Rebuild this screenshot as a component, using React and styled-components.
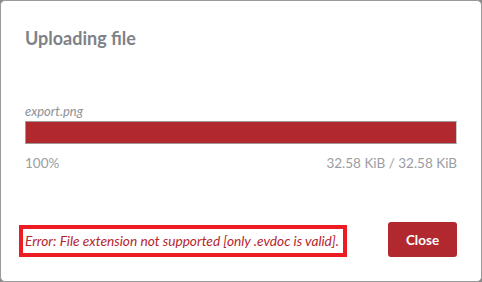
import React from "react";
import styled, { createGlobalStyle } from "styled-components";

const Global = createGlobalStyle`
  html, body { margin: 0; padding: 0; background: #8a8a8a; }
  body { font-family: Lato, "Noto Sans", sans-serif; }
  * { box-sizing: border-box; }
`;

const Dialog = styled.div`
  width: 482px;
  height: 282px;
  background: #fff;
  border: 1px solid #9a9a9a;
  border-radius: 5px;
  padding: 26px 24px 0 24px;
  display: flex;
  flex-direction: column;
`;

const Title = styled.h2`
  margin: 0;
  font-size: 18px;
  line-height: 22px;
  font-weight: 700;
  color: #7e8288;
`;

const FileName = styled.div`
  margin-top: 54px;
  font-size: 13px;
  line-height: 16px;
  font-style: italic;
  color: #8e9196;
`;

const Track = styled.div`
  margin-top: 2px;
  height: 23px;
  border: 1px solid #9a9a9a;
  border-right-color: #c9c9c9;
  background: #eee;
  overflow: hidden;
`;

const Fill = styled.div`
  height: 100%;
  background: #b1282f;
`;

const Stats = styled.div`
  margin-top: 11px;
  display: flex;
  justify-content: space-between;
  font-size: 13.5px;
  line-height: 17px;
  color: #9a9da2;
`;

const Footer = styled.div`
  margin-top: 50px;
  display: flex;
  justify-content: space-between;
  align-items: center;
`;

const ErrorText = styled.div`
  margin-left: -6px;
  margin-top: 2px;
  border: 4px solid #ed1c24;
  padding: 3px 4px 4px 2px;
  font-size: 13.7px;
  line-height: 17px;
  font-style: italic;
  color: #b5262e;
`;

const CloseButton = styled.button`
  width: 69px;
  height: 35px;
  border: none;
  border-radius: 3px;
  background: #b1282f;
  color: #fff;
  font-family: Lato, "Noto Sans", sans-serif;
  font-weight: 700;
  font-size: 13.5px;
  cursor: pointer;
`;

export default function App() {
  const percent = 100;
  return (
    <>
      <Global />
      <Dialog>
        <Title>Uploading file</Title>
        <FileName>export.png</FileName>
        <Track>
          <Fill style={{ width: `${percent}%` }} />
        </Track>
        <Stats>
          <span>{percent}%</span>
          <span>32.58 KiB / 32.58 KiB</span>
        </Stats>
        <Footer>
          <ErrorText>Error: File extension not supported [only .evdoc is valid].</ErrorText>
          <CloseButton>Close</CloseButton>
        </Footer>
      </Dialog>
    </>
  );
}
